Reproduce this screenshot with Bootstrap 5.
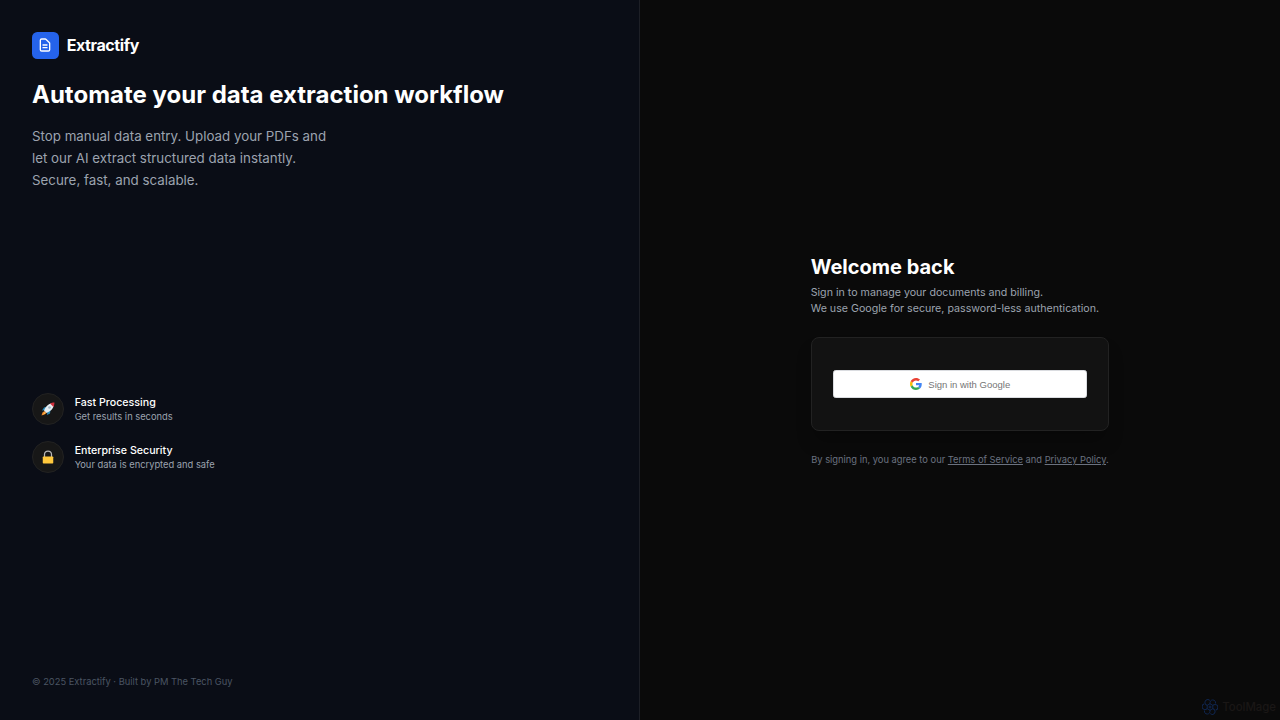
<!DOCTYPE html>
<html lang="en" data-bs-theme="dark">
<head>
<meta charset="utf-8">
<meta name="viewport" content="width=device-width, initial-scale=1">
<title>Extractify</title>
<link href="https://cdn.jsdelivr.net/npm/bootstrap@5.3.0/dist/css/bootstrap.min.css" rel="stylesheet">
<style>
body{font-family:Inter,"Liberation Sans",sans-serif;background:#0a0a0a;color:#fff;height:100vh;overflow:hidden}
.promo{background:#0a0d16;border-right:1px solid #1d1f26;padding:32px}
.logo-box{width:26.67px;height:26.67px;border-radius:5.33px;background:#2563eb}
.brand-name{font-size:16px;line-height:26.67px;font-weight:700;letter-spacing:-.4px}
.headline{font-size:24px;line-height:30px;font-weight:700;margin:21.33px 0 16.4px}
.pitch{font-size:13.33px;line-height:21.67px;color:#9ca3af;width:300px}
.features{gap:16px}
.feature{gap:10.67px}
.round-icon{width:32px;height:32px;background:#171717;border:1px solid #222}
.feat-title{font-size:10.67px;line-height:16px;font-weight:500;padding-top:1px;margin-bottom:-1px}
.feat-text{font-size:9.33px;line-height:13.33px;color:#9ca3af}
.copyright{font-size:9.33px;line-height:13.33px;color:#4b5563}
.signin{width:298.67px;padding-top:1px}
.signin h2{font-size:20px;line-height:24px;font-weight:700;margin-bottom:6.33px}
.intro{font-size:10.67px;line-height:16px;color:#9ca3af}
.panel{height:94px;margin:20px 0 22px;padding:0 21px;background:#121212;border:1px solid #222;border-radius:8px;box-shadow:0 13px 17px -3px rgba(0,0,0,.25)}
.google-btn{height:28.67px;background:#fff;border:1px solid #dadce0;border-radius:2.67px;color:#757575;font:400 9.5px "Liberation Sans",sans-serif;gap:6.5px}
.terms{font-size:9.33px;line-height:13.33px;color:#6b7280;padding-left:.5px}
.terms a{color:inherit}
.watermark{right:4px;bottom:5px;gap:4px;color:#1a1716;font-size:11.4px;line-height:16px;font-weight:500}
</style>
</head>
<body class="d-flex">
<section class="promo w-50 h-100 d-flex flex-column justify-content-between">
  <div>
    <div class="d-flex align-items-center gap-2">
      <div class="logo-box d-flex align-items-center justify-content-center">
        <svg width="16" height="16" viewBox="0 0 24 24" fill="none" stroke="#fff" stroke-width="2" stroke-linecap="round" stroke-linejoin="round"><path d="M9 12h6m-6 4h6m2 5H7a2 2 0 0 1-2-2V5a2 2 0 0 1 2-2h5.6a1 1 0 0 1 .7.3l5.4 5.4a1 1 0 0 1 .3.7V19a2 2 0 0 1-2 2z"/></svg>
      </div>
      <span class="brand-name">Extractify</span>
    </div>
    <h1 class="headline">Automate your data extraction workflow</h1>
    <p class="pitch mb-0">Stop manual data entry. Upload your PDFs and let our AI extract structured data instantly. Secure, fast, and scalable.</p>
  </div>
  <div class="features d-flex flex-column">
    <div class="feature d-flex align-items-center">
      <div class="round-icon rounded-circle d-flex align-items-center justify-content-center">
        <svg width="14" height="14" viewBox="0 0 28 28"><path d="M13 9 6 11 2 17l8-1zM19 15l-1 8-6 3 1-8z" fill="#2489b9"/><path d="M7 18 3 21l-2 6 6-2 4-3z" fill="#f28b2c"/><path d="m7 21-3 4 4-2 2-2z" fill="#ffd064"/><path d="M26 2C17 2 11 6 6 17l5 5c11-5 15-11 15-20z" fill="#e5edf2"/><path d="M27 1c-4 0-7 1-9 2l7 7c1-3 2-6 2-9z" fill="#d12f3c"/><circle cx="17" cy="11" r="2.7" fill="#a4b8c4"/></svg>
      </div>
      <div><div class="feat-title">Fast Processing</div><div class="feat-text">Get results in seconds</div></div>
    </div>
    <div class="feature d-flex align-items-center">
      <div class="round-icon rounded-circle d-flex align-items-center justify-content-center">
        <svg width="14" height="14" viewBox="0 0 28 28"><path d="M7 14V9a7 7 0 0 1 14 0v5" fill="none" stroke="#b8b8b8" stroke-width="2.5"/><rect x="3.5" y="13" width="21" height="14" rx="1.5" fill="#ffc83d"/></svg>
      </div>
      <div><div class="feat-title">Enterprise Security</div><div class="feat-text">Your data is encrypted and safe</div></div>
    </div>
  </div>
  <div class="copyright">© 2025 Extractify · Built by PM The Tech Guy</div>
</section>
<main class="w-50 h-100 d-flex align-items-center justify-content-center">
  <div class="signin">
    <h2>Welcome back</h2>
    <div class="intro text-nowrap">Sign in to manage your documents and billing.<br>We use Google for secure, password-less authentication.</div>
    <div class="panel d-flex align-items-center">
      <button class="google-btn w-100 p-0 d-flex align-items-center justify-content-center" type="button">
        <svg width="12" height="12" viewBox="0 0 48 48"><path fill="#EA4335" d="M24 9.5c3.54 0 6.71 1.22 9.21 3.6l6.85-6.85C35.9 2.38 30.47 0 24 0 14.62 0 6.51 5.38 2.56 13.22l7.98 6.19C12.43 13.72 17.74 9.5 24 9.5z"/><path fill="#4285F4" d="M46.98 24.55c0-1.57-.15-3.09-.38-4.55H24v9.02h12.94c-.58 2.96-2.26 5.48-4.78 7.18l7.73 6c4.51-4.18 7.09-10.36 7.09-17.65z"/><path fill="#FBBC05" d="M10.53 28.59A14.5 14.5 0 0 1 9.77 24c0-1.6.27-3.14.76-4.59l-7.98-6.19A24 24 0 0 0 0 24c0 3.88.92 7.54 2.56 10.78z"/><path fill="#34A853" d="M24 48c6.48 0 11.93-2.13 15.89-5.81l-7.73-6c-2.15 1.45-4.92 2.3-8.16 2.3-6.26 0-11.57-4.22-13.47-9.91l-7.98 6.19C6.51 42.62 14.62 48 24 48z"/></svg>
        <span>Sign in with Google</span>
      </button>
    </div>
    <div class="terms text-nowrap">By signing in, you agree to our <a href="#">Terms of Service</a> and <a href="#">Privacy Policy</a>.</div>
  </div>
</main>
<div class="watermark position-absolute d-flex align-items-center">
  <svg width="16" height="16" viewBox="0 0 32 32" fill="none" stroke="#10264f" stroke-width="2"><path id="petal" d="M16 10V7a5.5 5.5 0 0 1 8-4.5A5.5 5.5 0 0 1 27 9"/><use href="#petal" transform="rotate(60 16 16)"/><use href="#petal" transform="rotate(120 16 16)"/><use href="#petal" transform="rotate(180 16 16)"/><use href="#petal" transform="rotate(240 16 16)"/><use href="#petal" transform="rotate(300 16 16)"/><path d="m16 9.5 5.6 3.2v6.6L16 22.500l-5.600-3.200v-6.600z"/><circle cx="16" cy="16" r="2"/></svg>
  <span>ToolMage</span>
</div>
<script src="https://cdn.jsdelivr.net/npm/bootstrap@5.3.0/dist/js/bootstrap.bundle.min.js"></script>
</body>
</html>
